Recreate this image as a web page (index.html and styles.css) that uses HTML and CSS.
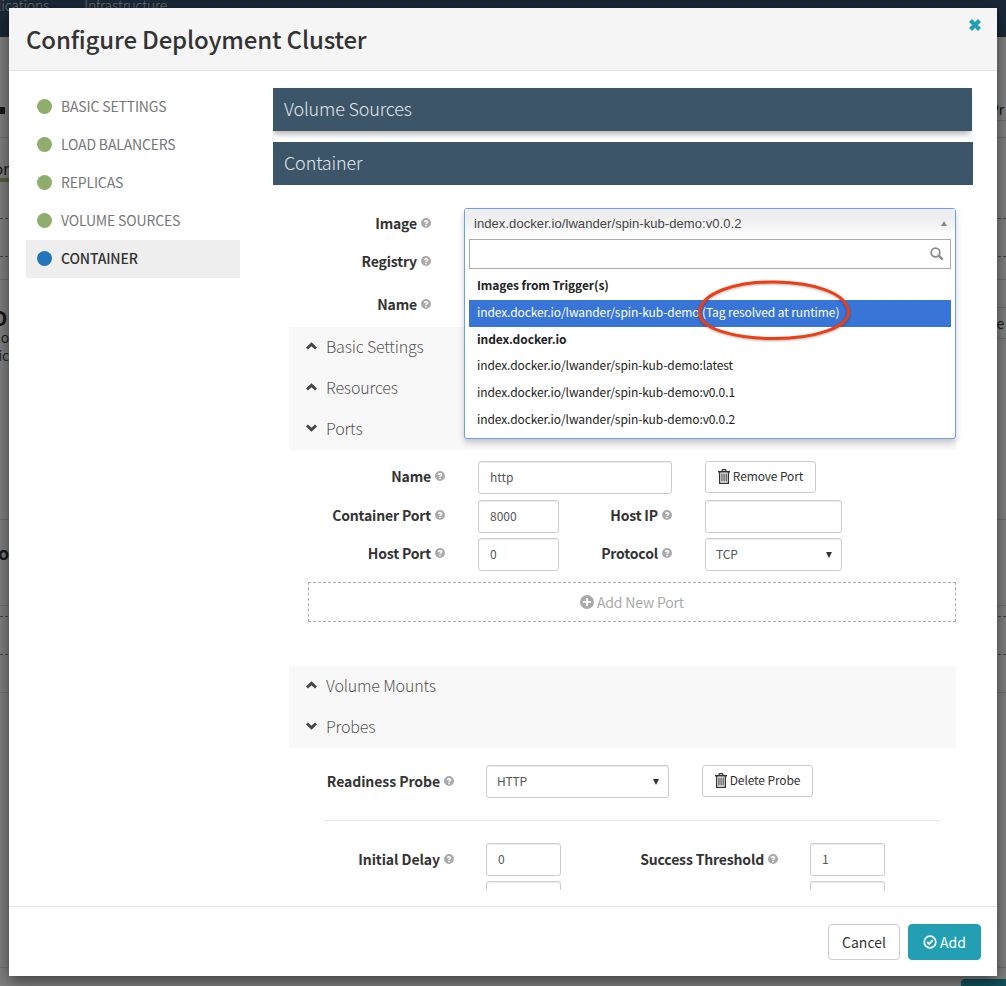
FILE: index.html
```html
<!DOCTYPE html>
<html lang="en">
<head>
    <meta charset="UTF-8">
    <meta name="viewport" content="width=device-width, initial-scale=1.0">
    <title>Configure Deployment Cluster</title>
    <link rel="stylesheet" href="styles.css">
</head>
<body>
    <svg class="icon-defs" width="0" height="0">
        <symbol id="i-help" viewBox="0 0 12 12"><path fill-rule="evenodd" d="M6 0a6 6 0 1 0 0 12A6 6 0 0 0 6 0zM6.900 10H5.100V8.400h1.800zm1.500-4.200c-.3.4-.6.6-1 .8-.4.3-.5.4-.5.9H5.100c0-1 .4-1.500 1.100-1.900.4-.2.6-.4.6-.8 0-.4-.3-.6-.8-.6s-.9.3-1 .9L3.400 4.700C3.700 3.200 4.800 2.400 6.100 2.400c1.500 0 2.700.9 2.700 2.200 0 .5-.1.9-.4 1.200z"/></symbol>
        <symbol id="i-trash" viewBox="0 0 12 15"><path fill-rule="evenodd" d="M4 0h4l.7 2H12v1.400h-1V15H1V3.400H0V2h3.300zM4.600 2h2.800l-.3-.8H4.900zM2.300 3.400V13.800h7.400V3.400zM3.400 4.600h1.100v8H3.400zm2.100 0h1.100v8H5.500zm2.100 0h1.100v8H7.600z"/></symbol>
        <symbol id="i-up" viewBox="0 0 12 8"><path d="M6 0l6 5.600L9.900 7.800 6 4.200 2.100 7.800 0 5.600z"/></symbol>
        <symbol id="i-down" viewBox="0 0 12 8"><path d="M6 8L0 2.400 2.100.2 6 3.800 9.900.2 12 2.400z"/></symbol>
    </svg>

    <div class="page">
        <div class="nav"><span>Applications</span><span>Infrastructure</span></div>
        <div class="bg-row h84">
            <div class="edge-l"><i class="tick"></i></div>
            <div class="edge-r lined"><span class="pr">Pr</span></div>
        </div>
        <div class="bg-row h17 ruled"></div>
        <div class="bg-row h142 ruled">
            <div class="edge-l stack">
                <span class="or">or</span>
                <i class="green-bar"></i>
            </div>
            <div class="dash d1"></div>
            <div class="dash d2"></div>
        </div>
        <div class="bg-row h240 ruled">
            <div class="edge-l stack">
                <b class="big">D</b>
                <span class="small">Clo</span>
                <span class="small">Servic</span>
            </div>
            <div class="edge-r stack">
                <div class="lined h28"></div>
                <div class="re lined"><span class="re-text">Re</span></div>
            </div>
        </div>
        <div class="bg-row h86 ruled">
            <div class="edge-l"><b class="ro">ro</b></div>
        </div>
        <div class="bg-row h87 ruled">
            <div class="dash d4"></div>
            <div class="dash d5"></div>
        </div>
        <div class="bg-row h275 ruled"></div>
        <div class="page-btn"></div>
    </div>
    <div class="backdrop"></div>

    <div class="modal">
        <header class="modal-head">
            <h1>Configure Deployment Cluster</h1>
            <svg class="close" viewBox="0 0 14 14"><path d="M2.500 2.500L11.500 11.500M11.500 2.500L2.500 11.500"/></svg>
        </header>

        <div class="modal-body">
            <nav class="steps">
                <div class="step"><i class="dot"></i>BASIC SETTINGS</div>
                <div class="step"><i class="dot"></i>LOAD BALANCERS</div>
                <div class="step"><i class="dot"></i>REPLICAS</div>
                <div class="step"><i class="dot"></i>VOLUME SOURCES</div>
                <div class="step current"><i class="dot"></i>CONTAINER</div>
            </nav>

            <div class="content">
                <h2 class="band band-short">Volume Sources</h2>
                <h2 class="band">Container</h2>

                <div class="top-row row-image">
                    <label class="lbl">Image <svg class="help"><use href="#i-help"/></svg></label>
                </div>
                <div class="top-row row-registry">
                    <label class="lbl">Registry <svg class="help"><use href="#i-help"/></svg></label>
                </div>
                <div class="top-row row-name">
                    <label class="lbl">Name <svg class="help"><use href="#i-help"/></svg></label>
                </div>

                <div class="section">
                    <div class="sec-head"><svg class="chev"><use href="#i-up"/></svg>Basic Settings</div>
                    <div class="sec-head"><svg class="chev"><use href="#i-up"/></svg>Resources</div>
                    <div class="sec-head"><svg class="chev"><use href="#i-down"/></svg>Ports</div>
                </div>

                <div class="ports">
                    <div class="form-row">
                        <label class="lbl">Name <svg class="help"><use href="#i-help"/></svg></label>
                        <input class="field w194" value="http">
                        <button class="btn btn-small btn-remove"><svg class="trash"><use href="#i-trash"/></svg>Remove Port</button>
                    </div>
                    <div class="form-row">
                        <label class="lbl">Container Port <svg class="help"><use href="#i-help"/></svg></label>
                        <input class="field w81" value="8000">
                        <label class="lbl lbl2">Host IP <svg class="help"><use href="#i-help"/></svg></label>
                        <input class="field w137">
                    </div>
                    <div class="form-row">
                        <label class="lbl">Host Port <svg class="help"><use href="#i-help"/></svg></label>
                        <input class="field w81" value="0">
                        <label class="lbl lbl2">Protocol <svg class="help"><use href="#i-help"/></svg></label>
                        <div class="field w137 fake-select">TCP<i class="caret"></i></div>
                    </div>
                    <div class="add-port">
                        <svg class="plus" viewBox="0 0 14 14"><path fill-rule="evenodd" d="M7 0a7 7 0 1 0 0 14A7 7 0 0 0 7 0zm4 8H8v3H6V8H3V6h3V3h2v3h3z"/></svg>Add New Port
                    </div>
                </div>

                <div class="section section-2">
                    <div class="sec-head"><svg class="chev"><use href="#i-up"/></svg>Volume Mounts</div>
                    <div class="sec-head"><svg class="chev"><use href="#i-down"/></svg>Probes</div>
                </div>

                <div class="probe-row">
                    <label class="lbl lbl-probe">Readiness Probe <svg class="help"><use href="#i-help"/></svg></label>
                    <div class="field w183 fake-select">HTTP<i class="caret"></i></div>
                    <button class="btn btn-small btn-delete"><svg class="trash"><use href="#i-trash"/></svg>Delete Probe</button>
                </div>
                <hr class="probe-rule">
                <div class="probe-grid">
                    <label class="lbl lbl-probe">Initial Delay <svg class="help"><use href="#i-help"/></svg></label>
                    <input class="field w75" value="0">
                    <label class="lbl lbl-thresh">Success Threshold <svg class="help"><use href="#i-help"/></svg></label>
                    <input class="field w75" value="1">
                </div>
                <div class="probe-grid next">
                    <span class="lbl-probe"></span>
                    <input class="field w75">
                    <span class="lbl-thresh"></span>
                    <input class="field w75">
                </div>

                <div class="dropdown">
                    <div class="dd-current">index.docker.io/lwander/spin-kub-demo:v0.0.2<i class="dd-arrow"></i></div>
                    <div class="dd-search">
                        <svg class="dd-glass" viewBox="0 0 14 14"><circle cx="5.500" cy="5.500" r="4.300" fill="none" stroke="#8a8a8a" stroke-width="1.800"/><path d="M8.700 8.700l4 4" stroke="#8a8a8a" stroke-width="2.400"/></svg>
                    </div>
                    <ul class="dd-list">
                        <li class="dd-group">Images from Trigger(s)</li>
                        <li class="dd-item active">index.docker.io/lwander/spin-kub-demo <span class="dd-note">(Tag resolved at runtime)</span></li>
                        <li class="dd-group">index.docker.io</li>
                        <li class="dd-item">index.docker.io/lwander/spin-kub-demo:latest</li>
                        <li class="dd-item">index.docker.io/lwander/spin-kub-demo:v0.0.1</li>
                        <li class="dd-item">index.docker.io/lwander/spin-kub-demo:v0.0.2</li>
                    </ul>
                </div>
                <svg class="ring" viewBox="0 0 156 62"><path d="M80 3C40 2 5 14 3.500 33 2.500 50 40 59.500 78 59.500 120 59.500 153 48 152.500 33 151.500 14 118 3.500 80 3z"/></svg>
            </div>
        </div>

        <footer class="modal-foot">
            <button class="btn btn-cancel">Cancel</button>
            <button class="btn btn-add"><svg class="check" viewBox="0 0 14 14"><circle cx="7" cy="7" r="5.800" fill="none" stroke="#fff" stroke-width="1.700"/><path d="M4.200 7l2 2 3.600-3.800" fill="none" stroke="#fff" stroke-width="1.800"/></svg>Add</button>
        </footer>
    </div>
</body>
</html>
```

FILE: styles.css
```css
* {
    box-sizing: border-box;
}
body {
    margin: 0;
    height: 986px;
    overflow: hidden;
    position: relative;
    font-family: "Noto Sans CJK SC", "Open Sans", sans-serif;
    font-size: 14px;
    letter-spacing: -0.012em;
    color: #333;
    background-color: #fff;
}
.icon-defs {
    position: absolute;
}

/* page behind the modal, only its edges show */
.page {
    height: 986px;
    display: flex;
    flex-direction: column;
}
.nav {
    height: 37px;
    flex: none;
    overflow: hidden;
    background-color: #35506c;
    color: #d8dfe6;
    font-weight: 300;
    font-size: 14px;
    line-height: 10px;
    display: flex;
    gap: 35px;
    margin-left: -27px;
}
.bg-row {
    flex: none;
    display: flex;
    justify-content: space-between;
    position: relative;
}
.ruled {
    border-bottom: 1px solid #ddd;
}
.h84 {
    height: 84px;
}
.h17 {
    height: 17px;
}
.h142 {
    height: 142px;
}
.h240 {
    height: 240px;
}
.h86 {
    height: 86px;
}
.h87 {
    height: 87px;
}
.h275 {
    height: 275px;
}
.h28 {
    height: 28px;
}
.edge-l {
    width: 9px;
    display: flex;
    justify-content: flex-end;
    white-space: nowrap;
}
.edge-r {
    width: 9px;
    white-space: nowrap;
    margin-left: auto;
}
.stack {
    display: flex;
    flex-direction: column;
    justify-content: flex-start;
    align-items: flex-end;
}
.edge-r.stack {
    align-items: stretch;
}
.lined {
    border-bottom: 1px solid #ddd;
}
.tick {
    width: 5px;
    height: 7px;
    background-color: #333;
    margin: 70px 4px 0 0;
}
.h84 .edge-r {
    height: 84px;
    padding-top: 62px;
}
.pr {
    margin-left: -7px;
}
.or {
    font-size: 16px;
    margin-top: 19px;
    line-height: 22px;
}
.green-bar {
    width: 9px;
    height: 4px;
    margin-top: -1px;
    background-color: #a3bf7c;
}
.dash {
    position: absolute;
    left: 0;
    right: 0;
    border-top: 1px dashed #888;
}
.d1 {
    top: 80px;
}
.d2 {
    top: 118px;
}
.d4 {
    top: 10px;
}
.d5 {
    top: 48px;
}
.big {
    font-size: 20px;
    line-height: 20px;
    margin-top: 28px;
    margin-right: 2px;
}
.small {
    font-size: 14px;
    line-height: 18px;
    color: #444;
}
.re {
    font-size: 14px;
    height: 31px;
    line-height: 30px;
}
.re-text {
    margin-left: -9px;
}
.ro {
    font-size: 18px;
    margin-top: 20px;
    line-height: 24px;
}
.page-btn {
    position: absolute;
    right: 0;
    bottom: 0;
    width: 45px;
    height: 7px;
    background-color: #229fb3;
    border-radius: 4px 0 0 0;
}
.backdrop {
    position: absolute;
    inset: 0;
    background-color: rgba(0, 0, 0, 0.5);
}

/* modal */
.modal {
    position: absolute;
    left: 9px;
    top: 8px;
    width: 988px;
    height: 968px;
    background-color: #fff;
    box-shadow: 0 5px 15px rgba(0, 0, 0, 0.5);
    display: flex;
    flex-direction: column;
}
.modal-head {
    height: 63px;
    flex: none;
    background-color: #f5f5f5;
    border-bottom: 1px solid #e5e5e5;
    padding: 13px 17px 0;
    position: relative;
}
.modal-head h1 {
    margin: 0;
    font-size: 24px;
    line-height: 36px;
    font-weight: 500;
    color: #333;
}
.close {
    position: absolute;
    top: 10px;
    right: 15px;
    width: 14px;
    height: 14px;
    fill: none;
    stroke: #229fb3;
    stroke-width: 4.200;
}
.modal-body {
    flex: 1;
    min-height: 0;
    display: flex;
    overflow: hidden;
}
.steps {
    width: 264px;
    flex: none;
    padding: 17px 0 0 17px;
}
.step {
    width: 214px;
    height: 38px;
    display: flex;
    align-items: center;
    padding: 0 0 2px 11px;
    gap: 9px;
    font-size: 14px;
    color: #777;
}
.step .dot {
    width: 15px;
    height: 15px;
    margin-top: 1px;
    border-radius: 50%;
    background-color: #8fad6d;
}
.step.current {
    background-color: #eee;
    color: #333;
    font-weight: 500;
}
.step.current .dot {
    background-color: #2275ba;
}
.content {
    width: 700px;
    position: relative;
    padding-top: 17px;
    height: 819px;
    overflow: hidden;
}
.band {
    margin: 0 0 11px;
    height: 43px;
    background-color: #3c5569;
    color: #e1e6ea;
    font-size: 18px;
    line-height: 41px;
    font-weight: 300;
    padding-left: 11px;
    width: 700px;
}
.band-short {
    width: 699px;
    box-shadow: -1px 4px 6px -1px rgba(0, 0, 0, 0.3);
}
.top-row {
    display: flex;
    align-items: center;
}
.row-image {
    margin-top: 19px;
    height: 38px;
}
.row-registry {
    height: 38px;
}
.row-name {
    margin-top: 1px;
    height: 46px;
}
.lbl {
    font-weight: 700;
    font-size: 14px;
    color: #333;
    width: 160px;
    flex: none;
    text-align: right;
    display: flex;
    justify-content: flex-end;
    align-items: center;
    gap: 4px;
    padding-right: 2px;
}
.help {
    width: 10px;
    height: 10px;
    fill: #aaa;
}
.section {
    margin-left: 16px;
    width: 667px;
    background-color: #f8f8f8;
}
.sec-head {
    height: 41px;
    display: flex;
    align-items: center;
    padding: 0 0 4px 17px;
    gap: 9px;
    font-size: 16px;
    font-weight: 300;
    color: #555;
}
.chev {
    width: 11px;
    height: 8px;
    fill: #444;
}
.ports {
    padding-top: 11px;
    margin-left: 16px;
    width: 667px;
}
.form-row {
    display: flex;
    height: 38.500px;
}
.form-row .lbl {
    width: 157px;
    height: 33px;
    padding: 0 1px 3px 0;
}
.field {
    font-family: inherit;
    font-size: 12px;
    height: 33px;
    padding: 0 11px 2px;
    border: 1px solid #ccc;
    border-radius: 3px;
    color: #555;
    background-color: #fff;
    flex: none;
    box-shadow: inset 0 1px 1px rgba(0, 0, 0, 0.075);
}
.w194 {
    width: 194px;
    margin-left: 32px;
}
.w81 {
    width: 81px;
    margin-left: 32px;
}
.w137 {
    width: 137px;
}
.w183 {
    width: 183px;
}
.w75 {
    width: 75px;
}
.form-row .lbl2 {
    width: 113px;
    padding-right: 0;
    margin-right: 33px;
}
.fake-select {
    position: relative;
    display: flex;
    align-items: center;
    padding-left: 10px;
}
.caret {
    position: absolute;
    right: 9px;
    top: 13px;
    width: 0;
    height: 0;
    border-left: 3.500px solid transparent;
    border-right: 3.500px solid transparent;
    border-top: 6px solid #333;
}
.btn {
    font-family: inherit;
    font-size: 12px;
    border: 1px solid #ccc;
    border-radius: 3px;
    background-color: #fff;
    color: #333;
    display: inline-flex;
    align-items: center;
    justify-content: center;
    padding: 0;
}
.btn-small {
    letter-spacing: -0.01em;
    padding-bottom: 3px;
}
.trash {
    width: 12px;
    height: 15px;
    fill: #333;
    margin-right: 3px;
    margin-top: 1px;
}
.btn-remove {
    width: 111px;
    height: 32px;
    margin-left: 33px;
}
.add-port {
    margin: 5.500px 0 0 19px;
    width: 648px;
    height: 40px;
    border: 1px dashed #aaa;
    display: flex;
    align-items: center;
    justify-content: center;
    color: #aaa;
    font-size: 14px;
    gap: 3px;
}
.plus {
    width: 14px;
    height: 14px;
    fill: #aaa;
}
.section-2 {
    margin-top: 44px;
}
.probe-row {
    display: flex;
    margin: 17px 0 0 16px;
    width: 667px;
}
.lbl-probe {
    width: 165px;
    flex: none;
    margin-right: 32px;
    padding: 0 0 2px;
    letter-spacing: -0.005em;
}
.probe-row .lbl {
    height: 33px;
}
.btn-delete {
    width: 111px;
    height: 32px;
    margin-left: 33px;
}
.probe-rule {
    margin: 22px 33px 0 51px;
    border: 0;
    border-top: 1px solid #e8e8e8;
}
.probe-grid {
    margin: 22px 0 0 16px;
    display: flex;
    height: 33px;
    align-items: center;
}
.probe-grid.next {
    margin-top: 5px;
}
.lbl-thresh {
    width: 217px;
    flex: none;
    margin-right: 32px;
    padding: 0 0 2px;
}

/* open image dropdown */
.dropdown {
    position: absolute;
    left: 191px;
    top: 137px;
    width: 492px;
    border: 1px solid #6da0e8;
    border-radius: 3px;
    background-color: #fff;
    box-shadow: 0 4px 6px rgba(0, 0, 0, 0.2);
}
.dd-current {
    height: 30px;
    font-family: "Liberation Sans", Arial, sans-serif;
    font-size: 13px;
    letter-spacing: 0.07px;
    line-height: 30px;
    padding-left: 9px;
    color: #444;
    background: linear-gradient(#eee 30%, #fff);
    position: relative;
}
.dd-arrow {
    position: absolute;
    right: 8px;
    top: 12px;
    width: 0;
    height: 0;
    border-left: 3.500px solid transparent;
    border-right: 3.500px solid transparent;
    border-bottom: 5px solid #888;
}
.dd-search {
    margin: 0 4px;
    height: 30px;
    border: 1px solid #aaa;
    position: relative;
}
.dd-glass {
    position: absolute;
    right: 6px;
    top: 7px;
    width: 14px;
    height: 14px;
}
.dd-list {
    list-style: none;
    margin: 4px 4px 3px;
    padding: 0;
    font-size: 12px;
    letter-spacing: -0.09px;
}
.dd-list li {
    height: 27px;
    line-height: 23px;
    padding-left: 8px;
    color: #222;
    white-space: nowrap;
}
.dd-list .dd-item {
    line-height: 21px;
}
.dd-list .dd-group {
    font-weight: 700;
}
.dd-list .active {
    line-height: 23px;
    background-color: #3875d7;
    color: #fff;
}
.ring {
    position: absolute;
    left: 423px;
    top: 208px;
    width: 156px;
    height: 62px;
    fill: none;
    stroke: #ef3e12;
    stroke-width: 3;
    filter: drop-shadow(0 1px 1px rgba(0, 0, 0, 0.3));
}
.modal-foot {
    height: 70px;
    flex: none;
    border-top: 1px solid #e5e5e5;
    display: flex;
    justify-content: flex-end;
    align-items: flex-start;
    gap: 8px;
    padding: 17px 16px 0 0;
}
.btn-cancel,
.btn-add {
    height: 36px;
    font-size: 14px;
    border-radius: 4px;
}
.btn-cancel {
    width: 72px;
}
.btn-add {
    width: 73px;
    background-color: #229fb3;
    border-color: #229fb3;
    color: #fff;
    gap: 3px;
}
.check {
    width: 14px;
    height: 14px;
}
```
